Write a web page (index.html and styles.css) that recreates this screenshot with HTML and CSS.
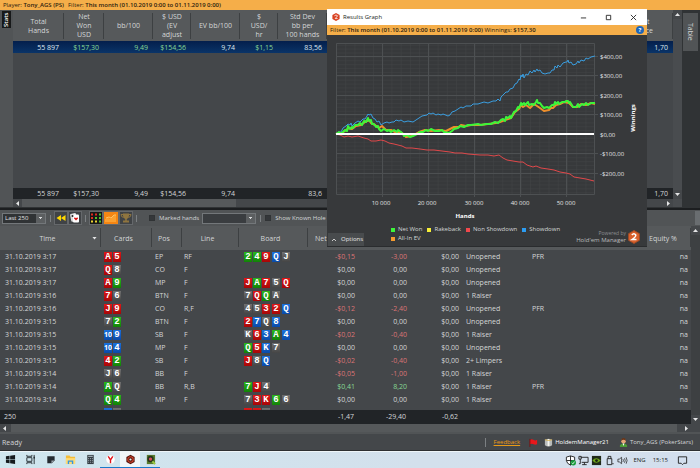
FILE: index.html
```html
<!DOCTYPE html>
<html lang="en">
<head>
    <meta charset="UTF-8">
    <meta name="viewport" content="width=device-width, initial-scale=1.0">
    <title>Hold'em Manager</title>
    <link rel="stylesheet" href="styles.css">
</head>
<body>
    <header class="filter-bar">
        <span>Player: <b>Tony_AGS (PS)</b></span>
        <span>Filter: <b>This month (01.10.2019 0:00 to 01.11.2019 0:00)</b></span>
    </header>

    <section class="report">
        <div class="left-tabs"><button class="stats-tab">Stats</button></div>
        <div class="report-main">
            <table class="report-table">
                <colgroup>
                    <col class="w51"><col class="w40"><col class="w49"><col class="w38"><col class="w49"><col class="w38"><col class="w49"><col><col class="w58">
                </colgroup>
                <thead>
                    <tr>
                        <th>Total<br>Hands</th>
                        <th>Net<br>Won<br>USD</th>
                        <th>bb/100</th>
                        <th>$ USD<br>(EV<br>adjust</th>
                        <th>EV bb/100</th>
                        <th>$<br>USD/<br>hr</th>
                        <th>Std Dev<br>bb per<br>100 hands</th>
                        <th></th>
                        <th>Bet<br>Force</th>
                    </tr>
                </thead>
                <tbody>
                    <tr class="selected">
                        <td>55 897</td><td class="win">$157,30</td><td class="win">9,49</td><td class="win">$154,56</td><td>9,74</td><td class="win">$1,15</td><td>83,56</td><td></td><td>1,70</td>
                    </tr>
                    <tr class="space"><td colspan="9"></td></tr>
                </tbody>
                <tfoot>
                    <tr>
                        <td>55 897</td><td>$157,30</td><td>9,49</td><td>$154,56</td><td>9,74</td><td></td><td>83,6</td><td></td><td>1,70</td>
                    </tr>
                </tfoot>
            </table>
            <div class="hscroll">
                <span class="arrow left"></span>
                <span class="thumb"></span>
                <span class="arrow right"></span>
            </div>
        </div>
        <div class="vscroll report-vscroll">
            <span class="arrow up"></span>
            <span class="arrow down"></span>
        </div>
        <div class="right-tabs"><button class="table-tab">Table</button></div>
    </section>

    <nav class="toolbar">
        <span class="picker">
            <select class="last-select" aria-label="Hands shown"><option>Last 250</option></select>
        </span>
        <i class="sep"></i>
        <button class="tool" aria-label="Replay">
            <svg viewBox="0 0 12 12"><path d="M6 3v6L1.500 6zM10.500 3v6L6 6z" fill="#ffd800"/></svg>
        </button>
        <button class="tool" aria-label="Hand">
            <svg viewBox="0 0 12 12"><rect x="1.500" y="1.500" width="6" height="8" rx="1" fill="#ddd" transform="rotate(-12 4 5)"/><rect x="4" y="2.500" width="6" height="8" rx="1" fill="#fff"/><path d="M7 8.500L5 6.500q0-1.500 2-.5 2-1 2 .5z" fill="#d11"/><circle cx="3.500" cy="4" r="1" fill="#222"/></svg>
        </button>
        <i class="sep"></i>
        <button class="tool" aria-label="Grid">
            <svg viewBox="0 0 12 12">
                <rect width="12" height="12" fill="#171717"/>
                <path d="M1 1.500h2v2H1zM5 1.500h2v2H5zM1 5h2v2H1z" fill="#e02a20"/>
                <path d="M9 1.500h2v2H9zM5 5h2v2H5zM9 5h2v2H9zM9 8.500h2v2H9z" fill="#4fc52c"/>
                <path d="M1 8.500h2v2H1zM5 8.500h2v2H5z" fill="#ecd331"/>
            </svg>
        </button>
        <button class="tool graph-tool" aria-label="Graph">
            <svg viewBox="0 0 14 12"><path d="M1 10V7l3-1 2 1 3-3 3-1v7z" fill="#ffb445" opacity=".6"/><path d="M2 6l3-1 2 1 3-3h2" fill="none" stroke="#ffd27a" stroke-width=".8"/></svg>
        </button>
        <button class="tool" aria-label="Tournaments">
            <svg viewBox="0 0 12 12"><path d="M3 1.500h6v2.500q-.5 2.500-2.200 3v1.500H9v2H3v-2h2.200V7Q3.500 6.500 3 4z" fill="#8f753f"/><path d="M3 2.500H1q0 2.500 2.500 3M9 2.500h2q0 2.500-2.500 3" fill="none" stroke="#8f753f"/></svg>
        </button>
        <i class="sep"></i>
        <label class="check marked"><input type="checkbox">Marked hands</label>
        <span class="picker">
            <select class="marked-select" aria-label="Marked hands type"><option></option></select>
        </span>
        <i class="sep"></i>
        <label class="check"><input type="checkbox">Show Known Hole</label>
        <i class="grip"></i>
    </nav>

    <section class="hands">
        <div class="hands-main">
            <div class="hands-view">
                <table class="hands-table">
                    <colgroup>
                        <col class="w101"><col class="w51"><col class="w30"><col class="w57"><col class="w69"><col class="w52"><col class="w52"><col class="w52"><col class="w66"><col class="w44"><col><col class="w49">
                    </colgroup>
                    <thead>
                        <tr>
                            <th class="sorted">Time</th><th>Cards</th><th>Pos</th><th>Line</th><th>Board</th><th class="net">Net Won</th><th></th><th></th><th></th><th></th><th></th><th class="equity">Equity %</th>
                        </tr>
                    </thead>
                    <tbody id="hand-rows"></tbody>
                </table>
            </div>
            <div class="totals">
                <span class="count">250</span><span>-1,47</span><span>-29,40</span><span>-0,62</span>
            </div>
        </div>
        <div class="vscroll">
            <span class="arrow up"></span>
            <span class="arrow down"></span>
        </div>
    </section>
    <div class="hscroll hands-hscroll">
        <span class="arrow left"></span>
        <span class="thumb"></span>
        <span class="arrow right"></span>
    </div>

    <footer class="status">
        <span class="ready">Ready</span>
        <a class="feedback" href="#">Feedback</a>
        <svg class="flag" viewBox="0 0 10 10"><path d="M1 2q2-1.500 4 0t4 0v5q-2 1-4 0t-4 0z" fill="#e8171b"/><path d="M1 1v9" stroke="#711"/></svg>
        <span class="account">
            <svg viewBox="0 0 10 10"><path d="M1 2q4-2 8 0v6q-4 3-8 0z" fill="#b9bcbb"/><path d="M4 1h2v8H4z" fill="#f5f5ef"/><path d="M1 2q4 1.500 8 0" stroke="#d8b04a" fill="none"/></svg>
            HoldemManager21
        </span>
        <span class="player">
            <svg viewBox="0 0 10 10"><path d="M1 10V8q1-2 4-2t4 2v2z" fill="#4c9c36"/><circle cx="5" cy="3.500" r="2.500" fill="#e7a777"/><path d="M2.500 3q0-3 2.500-3t2.500 3Q5 1 2.500 3z" fill="#6b3517"/><path d="M4 6l1 3 1-3z" fill="#fff"/></svg>
            Tony_AGS (PokerStars)
        </span>
    </footer>

    <div class="taskbar">
        <button class="task" aria-label="Start"><svg viewBox="0 0 12 12"><path d="M1 2.500l4-.6v3.800H1zM5.600 1.800L11 1v4.700H5.600zM1 6.300h4v3.800l-4-.6zM5.600 6.300H11V11l-5.400-.8z" fill="#151a1d"/></svg></button>
        <button class="task" aria-label="Task view"><svg viewBox="0 0 12 12" fill="none" stroke="#222a2e"><path d="M2 4h5.500v4H2zM2 1v1.500h5.500V1M2 11V9.500h5.500V11M10 1v10"/><path d="M9.300 4h1.500" stroke-width="2"/></svg></button>
        <button class="task" aria-label="Notes"><svg viewBox="0 0 12 12"><path d="M2.500 2.500h8v4.500l-3 3h-5z" fill="#252b30"/><path d="M7 10V7h3.500z" fill="#9ba6ad"/></svg></button>
        <button class="task" aria-label="Explorer"><svg viewBox="0 0 12 12"><path d="M1 1.500h4l1 1.500h5v8H1z" fill="#f4bd39"/><path d="M1 4.500h10V11H1z" fill="#ffda74"/><path d="M3 11V7h6v4H7.500V8.500h-3V11z" fill="#3595dc"/></svg></button>
        <button class="task" aria-label="Calculator"><svg viewBox="0 0 12 12"><rect x="2.500" y="1" width="7" height="10" fill="#343c42"/><path d="M3.500 2.500h5" stroke="#c9d8df"/><path d="M3.500 5h5M3.500 7h5M3.500 9h5" stroke="#a8b4bb" stroke-dasharray="1 1"/></svg></button>
        <button class="task open" aria-label="Browser"><svg viewBox="0 0 12 12"><circle cx="6" cy="6" r="5" fill="#fff" stroke="#ccd5da" stroke-width=".5"/><path d="M3.500 2.500L6 6.500l2.500-4M6 6v4" fill="none" stroke="#e0141b" stroke-width="1.500"/></svg></button>
        <button class="task open active" aria-label="Hold'em Manager"><svg viewBox="0 0 12 12"><path d="M6 .8L10.500 3.300v5.400L6 11.200 1.500 8.700V3.300z" fill="#53160d"/><circle cx="6" cy="6" r="3" fill="none" stroke="#d4432e" stroke-width="1.200"/><circle cx="6" cy="6" r="1.200" fill="#eee"/></svg></button>
        <button class="task open" aria-label="Recorder"><svg viewBox="0 0 12 12"><rect x="2" y="1" width="9" height="10" fill="#587a2e"/><circle cx="6" cy="5.500" r="3.500" fill="#26351a"/><circle cx="6" cy="5.500" r="1.800" fill="#d94c5a"/><path d="M8 8l3 3" stroke="#9ccc43" stroke-width="2"/></svg></button>

        <div class="tray">
            <svg viewBox="0 0 12 12"><path d="M6 1l4.500 1.300V6Q10 9.500 6 11 2 9.500 1.500 6V2.300z" fill="#fff" stroke="#222"/><path d="M6 1v10M1.500 6h9" stroke="#222"/><circle cx="9" cy="8.500" r="3" fill="#179b3c"/><path d="M7.500 8.500l1 1 2-2" stroke="#fff" fill="none"/></svg>
            <svg viewBox="0 0 12 12" fill="none" stroke="#222"><path d="M3 2.500h8v5.500H4M7 8v2.500M4.500 10.500h5M1 1.500h2.500v3H1zM2.500 4.500v5H1"/></svg>
            <svg viewBox="0 0 12 12"><rect x="1" y="1" width="10" height="10" fill="#20291a"/><path d="M1.500 6q4-5 9 0-5 5-9 0z" fill="#6fa51b"/><circle cx="6" cy="6" r="1.500" fill="#172010"/></svg>
            <svg viewBox="0 0 12 12" fill="none" stroke="#222"><path d="M4.500 4V1.500h3V4M3.500 4h5v6.500h-5zM9 9.500h1.500"/></svg>
            <svg viewBox="0 0 12 12" fill="none" stroke="#222"><path d="M1 4.500h1.500L5 2.500v7L2.500 7.500H1zM6.500 4.500q1 1.500 0 3M8.200 3.500q1.500 2.500 0 5M10 2.500q2 3.500 0 7" stroke-width=".8"/></svg>
            <span class="lang">ENG</span>
            <span class="clock">15:15</span>
            <svg viewBox="0 0 12 12" fill="none" stroke="#222"><path d="M1.500 2h9v7H7.500L6 10.500 4.500 9h-3z"/></svg>
        </div>
    </div>

    <!-- Results graph window, floats over both reports -->
    <div class="graph-window">
        <div class="title-bar">
            <svg class="logo" viewBox="0 0 10 10"><path d="M5 0l4.500 2.500v5L5 10 .5 7.500v-5z" fill="#d9401f"/><path d="M3 3.500q2-2 4 0L4 7h3" fill="none" stroke="#fff"/></svg>
            <span class="title">Results Graph</span>
            <button aria-label="Minimize"><svg viewBox="0 0 8 8"><path d="M1 4.500h6"/></svg></button>
            <button aria-label="Maximize"><svg viewBox="0 0 8 8"><path d="M1.500 1.500h5v5h-5z"/></svg></button>
            <button aria-label="Close"><svg viewBox="0 0 8 8"><path d="M1 1l6 6M7 1L1 7"/></svg></button>
        </div>
        <div class="filter-bar graph-filter">
            <span>Filter: <b>This month (01.10.2019 0:00 to 01.11.2019 0:00)</b> Winnings: <b>$157,30</b></span>
            <button class="help" aria-label="Help">?</button>
        </div>
        <svg class="chart" viewBox="327 35 320 186">
            <defs>
                <pattern id="minor" x="336" y="134" width="9.240" height="3.880" patternUnits="userSpaceOnUse">
                    <path d="M0 0H9.240M0 0V3.880" fill="none" stroke="#414446" stroke-width="1"/>
                </pattern>
            </defs>
            <rect x="336" y="43" width="259" height="151" fill="url(#minor)"/>
            <path class="major" d="M336.500 43.500h258v151h-258zM382.500 43v154M428.500 43v154M474.500 43v154M520.500 43v154M566.500 43v154M336 56.500h262M336 75.500h262M336 95.500h262M336 114.500h262M336 153.500h262M336 173.500h262"/>
            <polyline class="line non-showdown" points="336,134 340,135 344,137 348,136 352,137 358,136 364,138 368,139 371,141 376,141 381,140 385,141 389,143 394,144 398,145 402,146 406,148 412,148 420,149 427,150 434,150 442,151 450,152 455,153 462,153 468,154 480,155 488,155 494,156 499,155 503,158 507,160 513,161 519,162 523,162 527,165 533,167 536,166 541,168 548,169 554,170 560,172 566,173 570,174 574,177 580,178 586,179 590,180 594,181"/>
            <polyline class="line showdown" points="336,134 338,132 341,132 343,128 346,126 348,124 350,125 351,123 352,126 355,123 358,121 360,122 363,119 365,119 367,116 368,114 369,115 371,114 373,118 375,119 377,122 379,121 381,125 384,123 387,122 389,123 392,122 394,122 396,120 399,121 401,120 404,122 408,121 413,122 416,120 419,118 422,116 427,115 429,113 431,114 433,113 436,115 438,114 441,115 443,114 448,116 450,115 452,112 455,111 458,109 461,107 463,108 466,106 471,106 473,104 478,104 484,102 488,103 493,101 496,101 498,99 500,101 501,97 504,94 506,92 508,92 510,89 513,88 515,84 517,83 519,79 520,80 521,75 522,77 523,74 524,78 526,74 528,75 530,71 532,73 534,70 535,72 537,69 538,71 540,70 542,73 545,74 548,73 550,73 552,70 554,70 555,66 557,68 558,65 560,67 563,63 566,62 567,62 568,60 569,63 571,62 573,65 576,64 578,61 579,63 581,60 584,61 586,58 588,59 591,57 595,56"/>
            <polyline class="line ev" points="336,134 342,133 346,130 349,128 352,129 356,126 361,125 365,122 369,120 371,123 375,125 379,128 382,126 386,130 391,130 395,132 399,132 402,133 406,137 412,136 419,132 425,130 431,131 439,130 446,131 450,129 454,127 459,127 461,125 466,126 471,125 480,125 488,124 496,123 500,122 505,120 508,119 511,118 515,112 519,109 521,105 523,107 526,105 530,108 534,104 537,106 540,108 544,111 549,110 551,108 553,108 556,105 560,104 564,102 569,103 573,107 577,107 581,104 586,105 591,103 595,104"/>
            <polyline class="line net-won" points="336,134 339,132 340,134 343,132 345,130 347,131 348,126 350,129 352,127 353,128 355,125 358,125 360,123 362,125 364,121 366,122 368,118 369,121 371,120 372,124 374,124 376,127 378,126 379,129 381,131 384,129 387,131 389,130 391,132 394,130 397,132 398,130 401,132 403,134 404,136 407,135 410,137 413,136 417,134 420,132 423,132 426,130 428,131 431,129 435,131 439,131 442,130 444,132 449,133 452,131 454,129 458,128 460,126 464,127 468,125 471,125 478,124 481,125 486,124 491,124 495,122 498,123 501,120 503,119 505,121 506,117 508,118 510,116 511,118 514,112 516,111 518,107 519,108 521,103 522,105 524,103 525,105 528,102 529,105 532,104 534,105 536,102 537,100 538,103 540,103 542,106 544,108 547,107 549,108 552,105 554,105 555,102 556,104 558,102 559,104 562,102 565,102 566,101 568,101 569,103 570,102 573,107 576,107 578,104 579,107 582,104 584,105 586,103 588,105 591,103 595,103"/>
            <path d="M336 134h258" stroke="#fff" stroke-width="2"/>
            <g class="labels">
                <text x="600" y="59">$400,00</text>
                <text x="600" y="78">$300,00</text>
                <text x="600" y="98">$200,00</text>
                <text x="600" y="117">$100,00</text>
                <text x="600" y="137">$0,00</text>
                <text x="600" y="156">-$100,00</text>
                <text x="600" y="176">-$200,00</text>
            </g>
            <g class="labels middle">
                <text x="381" y="205">10 000</text>
                <text x="427" y="205">20 000</text>
                <text x="474" y="205">30 000</text>
                <text x="520" y="205">40 000</text>
                <text x="566" y="205">50 000</text>
                <text class="axis-title" x="465" y="218">Hands</text>
                <text class="axis-title" transform="translate(635 118) rotate(-90)">Winnings</text>
            </g>
        </svg>
        <div class="graph-footer">
            <button class="options"><svg viewBox="0 0 6 6"><path d="M1 4l2-2 2 2" fill="none" stroke="#ccc"/></svg>Options</button>
            <ul class="legend">
                <li class="k-net">Net Won</li>
                <li class="k-rake">Rakeback</li>
                <li class="k-non">Non Showdown</li>
                <li class="k-show">Showdown</li>
                <li class="k-ev">All-In EV</li>
            </ul>
            <div class="powered">
                <div><small>Powered by</small>Hold'em Manager</div>
                <svg viewBox="0 0 12 14"><path d="M6 .5l5.500 3.200v6.600L6 13.500.5 10.300V3.700z" fill="#d9602b" stroke="#9d4a26"/><path d="M3.800 5q2.200-2.500 4 0 .5 1.500-3.800 4.500h4.500" fill="none" stroke="#fff" stroke-width="1.500"/></svg>
            </div>
        </div>
    </div>

    <script>
        // time, cards, position, line, board, net won, bb, preflop action, own action
        // card colours: r = hearts, g = clubs, b = diamonds, k = spades
        const hands = [
            ["3:17", "Ar 5r", "EP", "RF", "2g 4g 9r Qb Jk", "-$0,15", "-3,00", "Unopened", "PFR"],
            ["3:17", "Qr 8k", "CO", "F", "", "$0,00", "0,00", "Unopened", ""],
            ["3:17", "Ar 9g", "MP", "F", "Jr Ag 7r 5k Qr", "$0,00", "0,00", "Unopened", ""],
            ["3:16", "7r 6k", "BTN", "F", "7k Qr Qg Ak", "$0,00", "0,00", "1 Raiser", ""],
            ["3:16", "Jr 9r", "CO", "R,F", "4k 5k 3r 2r Qb", "-$0,12", "-2,40", "Unopened", "PFR"],
            ["3:15", "7k 2g", "BTN", "F", "2r 7b Qk 8b", "$0,00", "0,00", "Unopened", ""],
            ["3:15", "10b 9b", "SB", "F", "Kk 6r 3b Ag 4b", "-$0,02", "-0,40", "1 Raiser", ""],
            ["3:15", "10b 4b", "MP", "F", "Qg 5r Kb 7k", "$0,00", "0,00", "Unopened", ""],
            ["3:15", "4r 2g", "SB", "F", "Jr 8k Qb", "-$0,02", "-0,40", "2+ Limpers", ""],
            ["3:14", "Jk 6k", "BB", "F", "", "-$0,05", "-1,00", "1 Raiser", ""],
            ["3:14", "Ag Qk", "BB", "R,B", "7g Jr 4k", "$0,41", "8,20", "1 Raiser", "PFR"],
            ["3:14", "Qg 4g", "MP", "F", "7k 3r Kr 6g 6k", "$0,00", "0,00", "1 Raiser", ""],
            ["", "b k", "", "", "r r k", "", "", "", ""]
        ];

        function cards(list) {
            if (!list) return "";
            return list.split(" ").map(c => {
                const rank = c.slice(0, -1);
                return `<span class="card ${c.slice(-1)}${rank == "10" ? " ten" : ""}">${rank}</span>`;
            }).join("");
        }

        function tone(value) {
            if (value.startsWith("-")) return "num loss";
            return /[1-9]/.test(value) ? "num win" : "num";
        }

        document.getElementById("hand-rows").innerHTML = hands.map(h => `
            <tr>
                <td class="time">${h[0] ? "31.10.2019 " + h[0] : ""}</td>
                <td><div class="cards">${cards(h[1])}</div></td>
                <td class="pos">${h[2]}</td>
                <td>${h[3]}</td>
                <td><div class="cards board">${cards(h[4])}</div></td>
                <td class="${tone(h[5])}">${h[5]}</td>
                <td class="${tone(h[6])}">${h[6]}</td>
                <td class="num">${h[0] ? "$0,00" : ""}</td>
                <td>${h[7]}</td>
                <td>${h[8]}</td>
                <td></td>
                <td class="na">${h[0] ? "na" : ""}</td>
            </tr>`).join("");
    </script>
</body>
</html>
```
FILE: styles.css
```css
* {
    box-sizing: border-box;
}
body {
    margin: 0;
    height: 100vh;
    position: relative;
    display: flex;
    flex-direction: column;
    overflow: hidden;
    background-color: #44474a;
    color: #d4d6d7;
    font-family: "Open Sans", "Noto Sans", sans-serif;
    font-size: 7px;
    line-height: 9px;
}
button {
    font: inherit;
    color: inherit;
    border: none;
    padding: 0;
    background: none;
}
svg {
    display: block;
}
table {
    width: 100%;
    table-layout: fixed;
    border-collapse: collapse;
}
th {
    font-weight: normal;
}
.w30 { width: 30px; }
.w38 { width: 38px; }
.w40 { width: 40px; }
.w44 { width: 44px; }
.w49 { width: 49px; }
.w51 { width: 51px; }
.w52 { width: 52px; }
.w57 { width: 57px; }
.w58 { width: 58px; }
.w66 { width: 66px; }
.w69 { width: 69px; }
.w101 { width: 101px; }
.win {
    color: #86d994;
}
.loss {
    color: #dc7476;
}

/* orange filter line */
.filter-bar {
    display: flex;
    flex: none;
    gap: 4px;
    height: 10px;
    padding: 0 3px;
    background-color: #f5ae49;
    color: #2b210f;
    font-size: 6px;
    line-height: 10px;
    white-space: nowrap;
}
.filter-bar b {
    font-weight: 600;
}

/* top report */
.report {
    display: flex;
    flex: none;
    border-bottom: 1px solid #303335;
}
.left-tabs {
    width: 13px;
    flex: none;
    background-color: #515456;
}
.stats-tab {
    display: block;
    width: 9px;
    height: 17px;
    margin: 1px 2px;
    background-color: #17191a;
    color: #fff;
    font-size: 6px;
    font-weight: 600;
    line-height: 9px;
    writing-mode: vertical-rl;
    transform: rotate(180deg);
}
.report-main {
    flex: 1;
    min-width: 0;
}
.report-table th {
    height: 31px;
    padding: 0;
    background-color: #56595b;
    background-image: linear-gradient(#3d4042, #3d4042);
    background-position: right 3px;
    background-size: 1px 26px;
    background-repeat: no-repeat;
}
.report-table td {
    height: 12px;
    padding: 0 5px 0 0;
    text-align: right;
    line-height: 11px;
}
.selected td {
    background: linear-gradient(#041f4c, #0a3468);
    color: #dfe6ef;
}
.selected .win {
    color: #86d994;
}
.space td {
    height: 135px;
}
.report-table tfoot td {
    height: 11px;
    background-color: #212427;
}
.hscroll {
    display: flex;
    flex: none;
    height: 8px;
    background-color: #44474a;
}
.hscroll .thumb {
    width: 214px;
    background-color: #56595b;
}
.hscroll .right {
    margin-left: auto;
}
.vscroll {
    display: flex;
    flex: none;
    flex-direction: column;
    justify-content: space-between;
    width: 9px;
    background-color: #3d4042;
}
.report-vscroll {
    padding-bottom: 8px;
    background-color: #494c4f;
}
.arrow {
    width: 9px;
    height: 9px;
    flex: none;
    background-color: #44474a;
}
.hscroll .arrow {
    height: 8px;
}
.arrow::before {
    content: "";
    display: block;
    width: 5px;
    height: 3px;
    margin: 3px 2px;
    background-color: #e4e5e6;
    clip-path: polygon(0 0, 100% 0, 50% 100%);
}
.arrow.up::before {
    clip-path: polygon(0 100%, 100% 100%, 50% 0);
}
.arrow.left::before,
.arrow.right::before {
    width: 3px;
    height: 5px;
    margin: 2px 3px;
    clip-path: polygon(100% 0, 100% 100%, 0 50%);
}
.arrow.right::before {
    clip-path: polygon(0 0, 0 100%, 100% 50%);
}
.right-tabs {
    width: 18px;
    flex: none;
    padding: 3px 2px 0 1px;
    background-color: #303335;
}
.table-tab {
    display: block;
    width: 15px;
    height: 38px;
    background-color: #515456;
    line-height: 15px;
    writing-mode: vertical-rl;
}

/* toolbar */
.toolbar {
    display: flex;
    flex: none;
    align-items: center;
    gap: 2px;
    height: 18px;
    padding-left: 2px;
    border-top: 2px solid #1c1e20;
    background-color: #515456;
    font-size: 6px;
    white-space: nowrap;
}
.picker {
    position: relative;
    display: flex;
}
.picker select {
    appearance: none;
    height: 11px;
    padding: 0 10px 0 2px;
    border: 1px solid #73777a;
    border-radius: 0;
    background-color: #3a3d40;
    color: #e4e5e6;
    font: inherit;
}
.picker .last-select {
    width: 44px;
    background-color: #303335;
}
.picker .marked-select {
    width: 54px;
}
.picker::after {
    content: "";
    position: absolute;
    top: 1px;
    right: 1px;
    width: 9px;
    height: 9px;
    background:
        conic-gradient(from -35deg at 50% 65%, #d4d6d7 70deg, transparent 0) center / 5px 3px no-repeat,
        #5c5f61;
    transform: rotate(0deg);
}
.sep {
    width: 1px;
    height: 7px;
    margin: 0 2px;
    background-color: #7c8083;
}
.tool {
    width: 12px;
    height: 12px;
    background-color: #404346;
    outline: 1px solid #65686b;
}
.graph-tool {
    width: 14px;
    background-color: #f58613;
}
.check {
    display: flex;
    align-items: center;
    gap: 4px;
}
.marked {
    margin: 0 1px 0 8px;
}
.check input {
    appearance: none;
    width: 6px;
    height: 6px;
    margin: 0;
    border: 1px solid #303335;
    background-color: #34373a;
}
.grip {
    width: 5px;
    height: 14px;
    margin-left: auto;
    background-color: #696d70;
}

/* hand list */
.hands {
    display: flex;
    flex: 1;
    min-height: 0;
}
.hands-main {
    display: flex;
    flex: 1;
    flex-direction: column;
    min-width: 0;
}
.hands-view {
    flex: 1;
    min-height: 0;
    overflow: hidden;
}
.hands-table th {
    height: 24px;
    padding: 0 6px 0 0;
    background-color: #56595b;
    background-image: linear-gradient(#3d4042, #3d4042);
    background-position: right 2px;
    background-size: 1px 19px;
    background-repeat: no-repeat;
    white-space: nowrap;
}
.hands-table .sorted::after {
    content: "";
    float: right;
    width: 5px;
    height: 3px;
    margin: 3px -2px 0 -3px;
    background-color: #e4e5e6;
    clip-path: polygon(0 0, 100% 0, 50% 100%);
}
.hands-table .net,
.hands-table .equity {
    padding-left: 7px;
    text-align: left;
}
.hands-table td {
    height: 13px;
    padding: 0 0 0 2px;
    white-space: nowrap;
}
.hands-table .time {
    padding-left: 5px;
}
.hands-table .pos {
    padding-left: 3px;
}
.hands-table .num {
    padding-right: 5px;
    text-align: right;
}
.hands-table .na {
    padding-right: 3px;
    text-align: right;
}
.cards {
    display: flex;
    gap: 1px;
    height: 10px;
    padding-left: 1px;
}
.board {
    padding-left: 3px;
}
.card {
    width: 8px;
    height: 10px;
    color: #fff;
    font-family: "Liberation Mono", monospace;
    font-size: 9px;
    font-weight: bold;
    line-height: 10px;
    text-align: center;
}
.ten {
    font-family: "Open Sans", sans-serif;
    font-size: 7px;
}
.board .card:nth-child(n+4) {
    margin-left: 1px;
}
.card.r { background: linear-gradient(#df1717, #a60707); }
.card.g { background: linear-gradient(#2bb51c, #128207); }
.card.b { background: linear-gradient(#1a70dc, #0a4aa8); }
.card.k { background: linear-gradient(#707070, #454545); }
.totals {
    display: flex;
    flex: none;
    height: 14px;
    background-color: #212427;
    line-height: 14px;
}
.totals span {
    width: 52px;
    padding-right: 6px;
    text-align: right;
}
.totals .count {
    width: 308px;
    padding-left: 4px;
    text-align: left;
}
.hands-hscroll {
    padding-right: 9px;
}
.hands-hscroll .thumb {
    flex: 1;
    margin: 0 5px 0 2px;
}

/* status bar */
.status {
    display: flex;
    flex: none;
    align-items: center;
    height: 19px;
    padding: 0 7px 0 2px;
    border-top: 2px solid #515456;
    border-bottom: 1px solid #2d2f31;
    white-space: nowrap;
}
.status svg {
    width: 9px;
    height: 9px;
}
.ready {
    flex: 1;
}
.feedback {
    padding-left: 8px;
    border-left: 1px solid #7c8083;
    color: #e99a15;
    font-size: 6px;
}
.flag {
    margin-left: 9px;
}
.account,
.player {
    display: flex;
    align-items: center;
    gap: 2px;
    margin-left: 6px;
    color: #fff;
    font-size: 6px;
}
.player {
    margin-left: 10px;
    color: #d4d6d7;
}

/* windows taskbar */
.taskbar {
    display: flex;
    flex: none;
    height: 17px;
    padding: 0 12px 0 0;
    border-top: 1px solid #eef5f8;
    background: linear-gradient(90deg, #cfe6ee, #d3e0ec 60%, #d3dfee);
    color: #1b1f22;
    font-size: 6px;
}
.task {
    display: flex;
    align-items: center;
    justify-content: center;
    width: 20px;
    border-bottom: 1px solid transparent;
}
.task svg,
.tray svg {
    width: 11px;
    height: 11px;
}
.open {
    border-bottom: 1px solid #1979ca;
}
.active {
    background-color: #f1f6f8;
}
.tray {
    display: flex;
    align-items: center;
    gap: 2px;
    margin-left: auto;
}
.lang {
    margin: 0 5px 0 3px;
}
.clock {
    margin-right: 7px;
}

/* graph window */
.graph-window {
    position: absolute;
    top: 9px;
    right: 53px;
    width: 320px;
    background-color: #37393b;
    border-bottom: 1px solid #2a2c2e;
}
.title-bar {
    display: flex;
    align-items: center;
    height: 16px;
    padding: 0 1px 0 5px;
    background-color: #fff;
    color: #1b1f22;
    font-size: 6px;
}
.logo {
    width: 8px;
    height: 8px;
    margin-right: 3px;
}
.title {
    flex: 1;
}
.title-bar button {
    width: 25px;
}
.title-bar button svg {
    width: 7px;
    height: 7px;
    margin: 0 auto;
    fill: none;
    stroke: #222;
}
.graph-filter {
    justify-content: space-between;
}
.graph-filter .help {
    width: 8px;
    height: 8px;
    margin-top: 1px;
    border-radius: 50%;
    background-color: #2067b8;
    color: #fff;
    font-weight: bold;
    line-height: 8px;
}
.chart {
    width: 100%;
}
.major {
    fill: none;
    stroke: #4d5052;
}
.line {
    fill: none;
    stroke-linejoin: round;
}
.net-won {
    stroke: #3cf53a;
    stroke-width: 2px;
}
.ev {
    stroke: #ee8f2c;
    stroke-width: 2px;
}
.showdown {
    stroke: #3a9ee0;
}
.non-showdown {
    stroke: #e0484a;
}
.labels {
    fill: #e4e5e6;
    font-size: 6px;
}
.middle {
    text-anchor: middle;
}
.axis-title {
    fill: #fff;
    font-weight: bold;
}
.graph-footer {
    display: flex;
    align-items: flex-end;
    height: 25px;
    padding-left: 1px;
    font-size: 6px;
}
.options {
    display: flex;
    align-items: center;
    gap: 4px;
    width: 36px;
    height: 13px;
    padding-left: 3px;
    background-color: #484b4d;
    color: #e4e5e6;
}
.options svg {
    width: 6px;
    height: 6px;
}
.legend {
    display: flex;
    flex: 1;
    flex-wrap: wrap;
    align-self: flex-start;
    column-gap: 5px;
    margin: 4px 0 0;
    padding: 0 0 0 27px;
    list-style: none;
    white-space: nowrap;
}
.legend li {
    display: flex;
    align-items: center;
    gap: 3px;
}
.legend li::before {
    content: "";
    width: 4px;
    height: 4px;
    background-color: currentColor;
}
.k-net::before { color: #3cf53a; }
.k-rake::before { color: #f6ee38; }
.k-non::before { color: #f0484c; }
.k-show::before { color: #2c9df2; }
.k-ev::before { color: #f59a2e; }
.powered {
    display: flex;
    gap: 2px;
    padding: 0 7px 2px 0;
    color: #b9bbbc;
    line-height: 7px;
    text-align: right;
}
.powered small {
    display: block;
    color: #8c8f91;
    font-size: 5px;
}
.powered svg {
    width: 12px;
    height: 14px;
}
```
